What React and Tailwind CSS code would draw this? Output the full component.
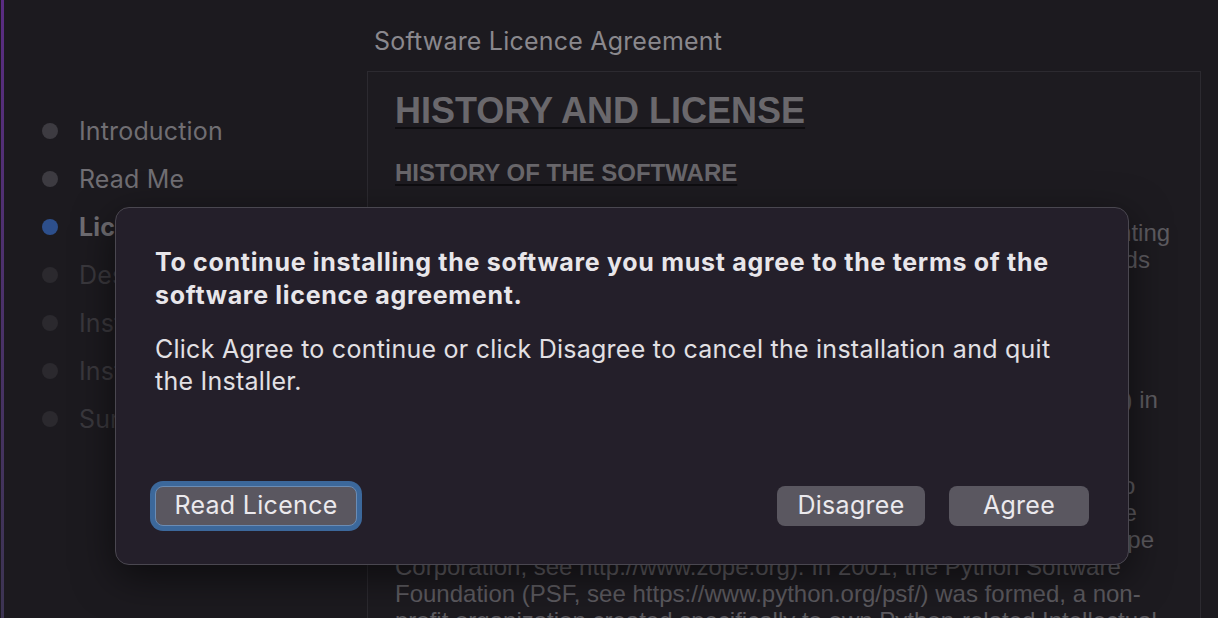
import React from "react";

const steps = [
  { label: "Introduction", state: "done" },
  { label: "Read Me", state: "done" },
  { label: "Licence", state: "current" },
  { label: "Destination Select", state: "todo" },
  { label: "Installation Type", state: "todo" },
  { label: "Installation", state: "todo" },
  { label: "Summary", state: "todo" },
];

const paragraphs = [
  [
    "Python was created in the early 1990s by Guido van Rossum at Stichting",
    "Mathematisch Centrum (CWI, see http://www.cwi.nl) in the Netherlands",
    "as a successor of a language called ABC. Guido remains Python's",
    "principal author, although it includes many contributions from",
  ],
  [
    "In 1995, Guido continued his work on Python at the Corporation for",
    "National Research Initiatives (CNRI, see http://www.cnri.reston.va.us) in",
    "Reston, Virginia where he released several versions of the",
  ],
  [
    "In May 2000, Guido and the Python core development team moved to",
    "BeOpen.com to form the BeOpen PythonLabs team. In October of the",
    "same year, the PythonLabs team moved to Digital Creations (now Zope",
    "Corporation, see http://www.zope.org). In 2001, the Python Software",
    "Foundation (PSF, see https://www.python.org/psf/) was formed, a non-",
    "profit organization created specifically to own Python-related Intellectual",
    "Property. Zope Corporation was a sponsoring member of the PSF.",
  ],
];

const uiFont = { fontFamily: "Inter, 'Noto Sans', sans-serif" };
const docFont = { fontFamily: "'Liberation Sans', Arial, sans-serif" };

const App = () => {
  return (
    <div
      className="relative flex w-[1218px] h-[618px] overflow-hidden bg-[#1c1a1f]"
      style={uiFont}
    >
      {/* window edge */}
      <div className="w-[1px] shrink-0" />
      <div className="w-[3px] shrink-0 bg-gradient-to-b from-[#5a2c82] to-[#3c3452]" />

      {/* sidebar with steps */}
      <div className="w-[363px] shrink-0 pt-[107px] pl-[38px]">
        {steps.map((step) => (
          <div key={step.label} className="flex items-center h-[48px]">
            <span
              className={`w-[16px] h-[16px] rounded-full ${
                step.state === "current"
                  ? "bg-[#2d4f8c]"
                  : step.state === "done"
                  ? "bg-[#3d3b41]"
                  : "bg-[#2b292e]"
              }`}
            />
            <span
              className={`ml-[21px] text-[25px] leading-none tracking-[0.15px] whitespace-nowrap ${
                step.state === "current"
                  ? "font-bold text-[#6f6d72]"
                  : step.state === "done"
                  ? "text-[#706e73]"
                  : "text-[#3a383d]"
              }`}
            >
              {step.label}
            </span>
          </div>
        ))}
      </div>

      {/* main column */}
      <div className="flex flex-col flex-1 min-w-0 pr-[17px]">
        <div className="h-[71px] pl-[7px] pt-[26px] text-[25px] leading-[30px] tracking-[0.2px] text-[#8a888d] whitespace-nowrap">
          Software Licence Agreement
        </div>
        <div
          className="flex-1 border-t border-l border-r border-[#2c2a30] bg-[#1d1b20] pl-[27px] pt-[18px] overflow-hidden text-[#5d5b60]"
          style={docFont}
        >
          <h1 className="text-[36px] leading-[42px] font-bold text-[#6a686c] underline decoration-[#0e0d10] decoration-2 underline-offset-[4px] whitespace-nowrap">
            HISTORY AND LICENSE
          </h1>
          <h2 className="mt-[27px] text-[24px] leading-[28px] font-bold text-[#68666a] underline decoration-[#0e0d10] decoration-2 underline-offset-[3px] whitespace-nowrap">
            HISTORY OF THE SOFTWARE
          </h2>
          <div className="mt-[32px] flex flex-col gap-[32px]">
            {paragraphs.map((lines, i) => (
              <p key={i} className="text-[24px] leading-[27px]">
                {lines.map((line) => (
                  <span key={line} className="block whitespace-nowrap">
                    {line}
                  </span>
                ))}
              </p>
            ))}
          </div>
        </div>
      </div>

      {/* sheet dialog */}
      <div className="absolute left-[115px] top-[207px] w-[1014px] h-[358px] flex flex-col rounded-[14px] border border-[#4a4750] bg-[#241f2a] px-[39px] pt-[38px] pb-[38px] shadow-[0_12px_40px_rgba(0,0,0,0.55)]">
        <p className="text-[25px] leading-[33px] tracking-[0.7px] font-bold text-[#e8e6ea] whitespace-nowrap">
          To continue installing the software you must agree to the terms of the
          <br />
          software licence agreement.
        </p>
        <p className="mt-[21px] text-[25px] leading-[32px] tracking-[0.25px] text-[#e2e0e4] whitespace-nowrap">
          Click Agree to continue or click Disagree to cancel the installation and quit
          <br />
          the Installer.
        </p>
        <div className="mt-auto flex items-center">
          <button className="w-[202px] h-[40px] rounded-[8px] border border-[#6a8cb5] bg-[#5a5760] ring-[5px] ring-[#3c689b] text-[25px] tracking-[0.3px] text-[#ebe9ed]">
            Read Licence
          </button>
          <div className="flex-1" />
          <button className="w-[148px] h-[40px] rounded-[8px] bg-[#5a5760] text-[25px] tracking-[0.3px] text-[#ebe9ed]">
            Disagree
          </button>
          <button className="ml-[24px] w-[140px] h-[40px] rounded-[8px] bg-[#5a5760] text-[25px] tracking-[0.3px] text-[#ebe9ed]">
            Agree
          </button>
        </div>
      </div>
    </div>
  );
};

export default App;
